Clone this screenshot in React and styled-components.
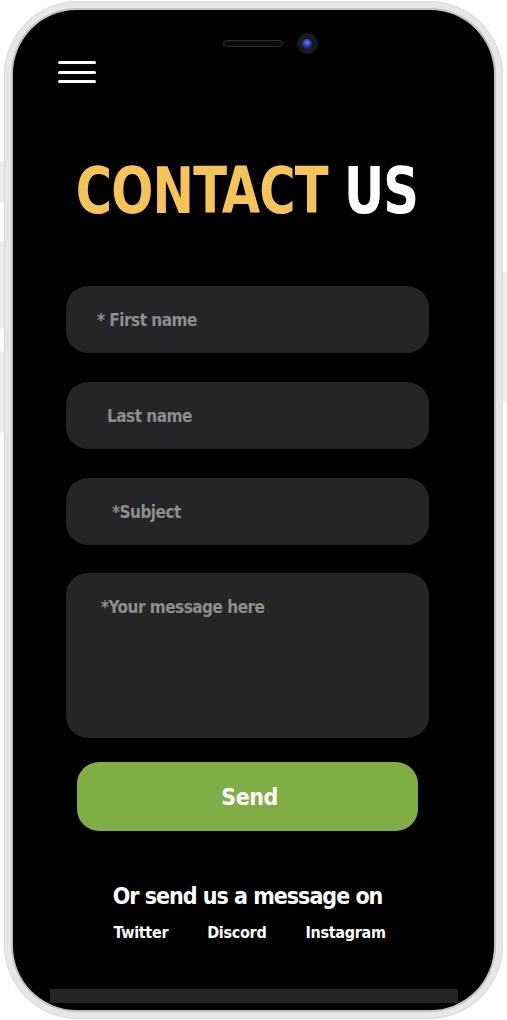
import React from 'react';
import styled, { createGlobalStyle } from 'styled-components';

const GlobalStyle = createGlobalStyle`
  html, body {
    margin: 0;
    padding: 0;
    background: #fff;
  }
  * {
    box-sizing: border-box;
  }
`;

const FONT = `"DejaVu Sans Condensed", "DejaVu Sans", sans-serif`;

const Page = styled.div`
  width: 507px;
  height: 1020px;
  padding: 1px 4px 1px 4px;
`;

const Phone = styled.div`
  position: relative;
  height: 100%;
  border-radius: 74px;
  background: #e8e7e7;
  padding: 7px 7px;
  box-shadow: inset 0 0 0 1px #dcdbdb;
`;

const SideKey = styled.span`
  position: absolute;
  width: 4px;
  top: ${p => p.top}px;
  height: ${p => p.height}px;
  ${p => (p.right ? 'right: -4px;' : 'left: -4px;')}
  background: #eeeded;
  border-radius: 2px;
`;

const Bezel = styled.div`
  height: 100%;
  border-radius: 66px;
  background: #c4c3c3;
  padding: 2px;
`;

const Screen = styled.div`
  height: 100%;
  border-radius: 64px;
  background: #000;
  overflow: hidden;
  display: flex;
  flex-direction: column;
  font-family: ${FONT};
  font-weight: 700;
`;

const Notch = styled.div`
  display: flex;
  align-items: center;
  justify-content: center;
  gap: 14px;
  margin-top: 23px;
  padding-left: 33px;
`;

const Speaker = styled.span`
  width: 60px;
  height: 7px;
  border-radius: 4px;
  background: #0b0b0b;
  border: 1.5px solid #2e2e2e;
`;

const Camera = styled.span`
  width: 21px;
  height: 21px;
  border-radius: 50%;
  background: #1a1a1c;
  display: flex;
  align-items: center;
  justify-content: center;

  &::after {
    content: '';
    width: 10px;
    height: 10px;
    border-radius: 50%;
    background: radial-gradient(circle at 50% 35%, #6b7cff 0, #2a3aa8 45%, #0b1030 100%);
  }
`;

const Burger = styled.button`
  margin: 7px 0 0 45px;
  width: 38px;
  padding: 0;
  background: none;
  border: 0;
  display: flex;
  flex-direction: column;
  gap: 6.5px;

  span {
    height: 3px;
    border-radius: 2px;
    background: #fff;
  }
`;

const Content = styled.div`
  width: 363px;
  margin-left: 53px;
  display: flex;
  flex-direction: column;
  align-items: center;
`;

const Title = styled.h1`
  margin: 76px 0 0;
  font-family: ${FONT};
  font-size: 64px;
  line-height: 1;
  font-weight: 700;
  letter-spacing: -1px;
  color: #fff;
  white-space: nowrap;
  transform: scaleX(0.86);

  span {
    color: #f5c35a;
  }
`;

const Form = styled.form`
  align-self: stretch;
  margin-top: 63px;
  display: flex;
  flex-direction: column;
  align-items: center;
  gap: 29px;
`;

const Field = styled.input`
  width: 100%;
  height: 67px;
  border: 0;
  border-radius: 22px;
  background: #252527;
  padding: 0 16px 0 ${p => p.indent}px;
  font-family: ${FONT};
  font-weight: 700;
  font-size: 17px;
  letter-spacing: -0.5px;
  color: #ddd;
  outline: none;

  &::placeholder {
    color: #8e8e8e;
  }
`;

const Message = styled.textarea`
  width: 100%;
  height: 165px;
  margin-top: -1px;
  border: 0;
  border-radius: 22px;
  background: #252527;
  padding: 24px 16px 0 ${p => p.indent}px;
  resize: none;
  font-family: ${FONT};
  font-weight: 700;
  font-size: 17px;
  letter-spacing: -0.5px;
  color: #ddd;
  outline: none;

  &::placeholder {
    color: #8e8e8e;
  }
`;

const SendButton = styled.button`
  width: 341px;
  height: 69px;
  margin-top: -5px;
  border: 0;
  border-radius: 22px;
  background: #80ad46;
  color: #fff;
  font-family: ${FONT};
  font-weight: 700;
  font-size: 23px;
  letter-spacing: -0.5px;
  padding-left: 10px;
`;

const Lead = styled.p`
  margin: 50px 0 0;
  font-size: 23px;
  line-height: 30px;
  letter-spacing: -1px;
  color: #fff;
`;

const Links = styled.nav`
  margin-top: 11px;
  padding-left: 4px;
  display: flex;
  gap: 39px;
`;

const Social = styled.a`
  color: #fff;
  font-size: 16px;
  line-height: 22px;
  letter-spacing: -0.3px;
  text-decoration: none;
`;

const HomeBar = styled.div`
  margin: auto 36px 7px 37px;
  height: 14px;
  background: #252527;
`;

export default function App() {
  return (
    <Page>
      <GlobalStyle />
      <Phone>
        <SideKey top={160} height={42} />
        <SideKey top={240} height={88} />
        <SideKey top={350} height={82} />
        <SideKey right top={270} height={132} />
        <Bezel>
          <Screen>
            <Notch>
              <Speaker />
              <Camera />
            </Notch>
            <Burger type="button" aria-label="Menu">
              <span />
              <span />
              <span />
            </Burger>
            <Content>
              <Title>
                <span>CONTACT</span> US
              </Title>
              <Form onSubmit={e => e.preventDefault()}>
                <Field indent={31} placeholder="* First name" />
                <Field indent={41} placeholder="Last name" />
                <Field indent={46} placeholder="*Subject" />
                <Message indent={35} placeholder="*Your message here" />
                <SendButton type="submit">Send</SendButton>
              </Form>
              <Lead>Or send us a message on</Lead>
              <Links>
                <Social href="#">Twitter</Social>
                <Social href="#">Discord</Social>
                <Social href="#">Instagram</Social>
              </Links>
            </Content>
            <HomeBar />
          </Screen>
        </Bezel>
      </Phone>
    </Page>
  );
}
